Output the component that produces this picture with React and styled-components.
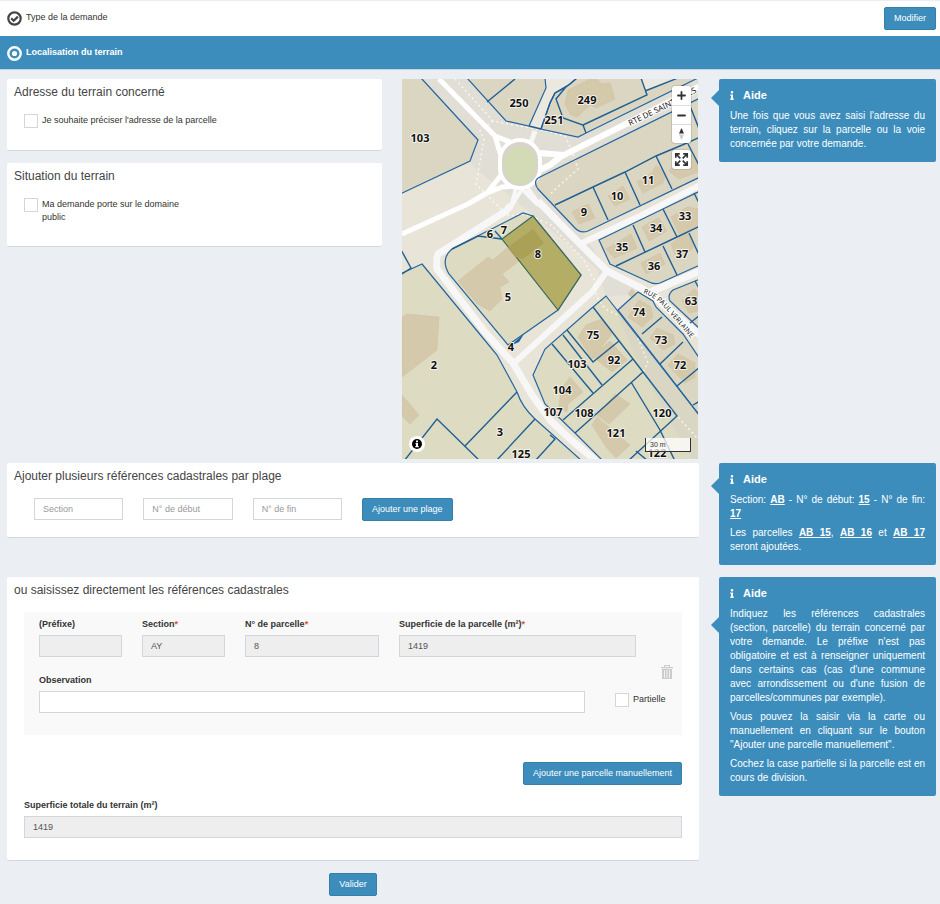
import React from "react";
import styled, { createGlobalStyle } from "styled-components";
import { FaInfo } from "react-icons/fa";

const GlobalStyle = createGlobalStyle`
  *,
  *::before,
  *::after {
    box-sizing: border-box;
  }
  body {
    margin: 0;
    background: #ebeef3;
    color: #333;
    font-family: "Liberation Sans", Arial, sans-serif;
    font-size: 9px;
    line-height: 13px;
  }
  button,
  input {
    font-family: inherit;
    font-size: inherit;
  }
`;

const CheckStepIcon = () => (
  <svg width="15" height="15" viewBox="0 0 15 15" fill="none" aria-hidden="true">
    <circle cx="7.5" cy="7.5" r="6.2" stroke="#444" strokeWidth="2.2" />
    <path d="M4.2 7.3l2.5 2.5 4.2-4.2" stroke="#444" strokeWidth="2.2" />
  </svg>
);

const CurrentStepIcon = () => (
  <svg width="15" height="15" viewBox="0 0 15 15" fill="none" aria-hidden="true">
    <circle cx="7.5" cy="7.5" r="6.2" stroke="#fff" strokeWidth="2.4" />
    <circle cx="7.5" cy="7.5" r="2.6" fill="#fff" />
  </svg>
);

const TrashIcon = () => (
  <svg width="12" height="14" viewBox="0 0 12 14" fill="#ccc" aria-hidden="true">
    <path d="M3 2V0h6v2H8V1H4v1zM0 2h12v1.2H0z" />
    <path
      fillRule="evenodd"
      d="M1 4h10v10H1zM3 5v8h.8V5zM5.6 5v8h.8V5zM8.2 5v8H9V5z"
    />
  </svg>
);

const roads = [
  { d: "M37 0L93 57L113 65M93 57L99 77", w: 5, c: "#fff" },
  { d: "M0 155L66 125L85 114L100 108L113 107M100 95L85 114", w: 5, c: "#fff" },
  { d: "M138 74L161 76L148 86L138 91M158 78L226 44L298 7", w: 6, c: "#fff" },
  { d: "M133 52L128 66", w: 5, c: "#f7f7f7" },
  { d: "M114 109L109 128L120 110L136 126M125 108L139 128", w: 4, c: "#f7f7f7" },
  {
    d: "M109 126L104 132L36 175Q34 178 35 190L83 253L111 284L130 316L148 341L168 360L194 382",
    w: 7,
    c: "#f7f7f7",
  },
  { d: "M136 122L178 165L205 192L241 210L258 223L300 258", w: 7, c: "#f7f7f7" },
  { d: "M178 165L240 136L298 106", w: 6, c: "#f7f7f7" },
  { d: "M205 192L190 213L111 285", w: 6, c: "#f7f7f7" },
  { d: "M246 214L298 192", w: 7, c: "#f7f7f7" },
];

const footpaths = [
  "M53 0L91 42L148 53L163 57L170 72L176 90L148 115",
  "M91 42L78 52L82 60L74 105L96 127L108 138",
  "M148 145L181 180L192 200L195 218L203 230L218 237",
  "M110 137L118 135L128 137L148 145",
  "M234 254L246 284L241 293L275 337L298 362",
];

// parcels drawn on the grey-beige side and on the greener side of the map
const beigeParcels = [
  "M-2 -2H18L20 0L76 61L68 82L-2 115Z",
  "M65 -1L104 42L127 47L144 9L143 -1Z",
  "M175 -1L163 9L153 14L148 24L139 50L176 58L184 54L298 -2Z",
  "M298 19L136 99Q131 103 136 110L172 148Q178 155 186 152L298 98Z",
  "M197 161L261 130L298 112V186L258 204Q252 206 245 202L208 185Z",
  "M298 200L271 211Q265 216 268 222L298 250Z",
  "M216 231L236 213L251 222L254 228L281 255L298 280V337L258 285Z",
];

const greenParcels = [
  "M20 185L76 253L95 276L115 313Q120 328 133 340L180 382H-2V195Z",
  "M50 170L121 134L131 137L179 196L156 231L106 266L47 195Q38 180 50 170Z",
  "M204 217L298 337V382H201L173 354L143 325L131 296L143 270L191 228Z",
];

const buildings = [
  "M163 25L166 11L192 -2L200 5L208 4L213 20L194 29L188 26L175 38L169 36Z",
  "M170 133L186 125L193 139L177 145Z",
  "M206 117L221 107L228 120L213 127Z",
  "M235 103L250 94L254 86L264 95L261 104L241 114Z",
  "M267 92L277 77L288 74L296 85V93L277 100Z",
  "M204 170L229 155L235 169L212 179Z",
  "M240 148L257 139L265 152L247 162Z",
  "M239 184L258 174L263 185L244 195Z",
  "M269 165L285 153L292 168L283 176L275 180Z",
  "M269 138L285 128L296 130V148L277 155Z",
  "M280 222L292 210L296 213V232L287 234Z",
  "M226 238L237 221L249 228L251 238L240 248Z",
  "M226 215L230 210L234 215L230 219Z",
  "M176 258L184 246L200 240L210 255L190 280Z",
  "M190 277L208 262L225 281L210 293Z",
  "M248 259L255 249L271 256L273 265L261 271Z",
  "M266 286L276 275L293 284L293 298L283 304Z",
  "M159 310L168 298L181 313L166 325L165 333L157 328Z",
  "M195 336L213 315L228 325L207 345Z",
  "M190 346L195 338L228 366L214 379L204 368Z",
  "M0 238L5 235L37 238L36 255L35 271L0 298Z",
  "M0 316L17 336L8 345L0 337Z",
  "M56 202L86 178L91 181L106 168L117 182L100 195L107 203L98 208L100 220L88 232L75 225L72 221Z",
];

const boundaries = [
  "M85 23L113 0",
  "M127 47L139 50",
  "M139 50L148 24L153 14L168 5L175 -1M184 54L181 46L161 39L154 20L163 9M181 46L245 16L239 -1M243 12L276 -1",
  "M153 126L191 108L223 93L254 77L285 64L298 58",
  "M191 108L206 141M223 93L238 126M254 77L270 110M286 65L298 88M288 27L298 52",
  "M214 187L275 158L298 147M231 146L243 173M261 130L275 158M261 167L275 196M287 154L298 178M292 114L298 126",
  "M293 202L298 211M288 244L298 236",
  "M-2 169L9 189L0 195",
  "M50 170L76 157L100 160L93 152",
  "M115 313L63 367M2 382L35 340L78 382M133 340L94 382M133 382L153 360L148 356",
  "M150 265L191 314M161 256L200 306M165 251L191 283L217 262M191 228L231 280L275 337L226 382",
  "M161 341L231 280M173 354L241 293M229 303L258 351L273 382M234 372L246 382",
  "M258 285L281 263M275 307L298 288M240 255L260 238M291 326L298 322",
];

const labels = [
  ["103", 18, 59],
  ["250", 117, 24],
  ["249", 185, 21],
  ["251", 152, 41],
  ["11", 246, 101],
  ["10", 215, 117],
  ["9", 182, 133],
  ["33", 283, 137],
  ["34", 254, 149],
  ["35", 220, 168],
  ["36", 252, 187],
  ["37", 280, 175],
  ["8", 136, 175],
  ["7", 102, 151],
  ["6", 88, 155],
  ["5", 106, 218],
  ["4", 109, 268],
  ["2", 32, 286],
  ["3", 98, 353],
  ["125", 119, 375],
  ["63", 289, 222],
  ["74", 237, 233],
  ["75", 191, 256],
  ["73", 259, 261],
  ["72", 278, 286],
  ["92", 212, 281],
  ["103", 175, 285],
  ["104", 160, 311],
  ["107", 151, 333],
  ["108", 182, 334],
  ["120", 260, 334],
  ["121", 214, 354],
  ["122", 255, 374],
];

const ParcelMap = () => (
  <MapSvg viewBox="0 0 296 380" preserveAspectRatio="xMidYMid slice">
    <rect width="296" height="380" fill="#e8e4d8" />
    <path
      d="M20 0H296V20L136 99L178 150L205 192L250 215L204 217L195 190L130 135L74 90L68 82L76 61Z"
      fill="#e1ded6"
    />
    <path d="M143 0H175L148 24L139 50L127 47L144 9Z" fill="#ebe9df" />
    {beigeParcels.map((d) => (
      <path key={d} d={d} fill="#dad6c2" />
    ))}
    <path d="M239 0L243 12L276 0Z" fill="#ebe9df" />
    {greenParcels.map((d) => (
      <path key={d} d={d} fill="#dddcc2" />
    ))}
    <path d="M211 225L228 247L234 254L258 285L296 335V380H290L241 293Z" fill="#d9d6c4" />
    {buildings.map((d) => (
      <path key={d} d={d} fill="#d5c9ab" stroke="#cfbfa0" strokeWidth="0.5" />
    ))}
    {roads.map((r) => (
      <path
        key={r.d}
        d={r.d}
        fill="none"
        stroke={r.c}
        strokeWidth={r.w}
        strokeLinejoin="round"
      />
    ))}
    <rect x="98" y="61" width="40" height="48" rx="20" fill="#d8d4cb" stroke="#fff" strokeWidth="4" />
    <ellipse cx="118" cy="86" rx="16" ry="19" fill="#d3dbb6" />
    {footpaths.map((d) => (
      <path
        key={d}
        d={d}
        fill="none"
        stroke="#fff"
        strokeWidth="1.5"
        strokeDasharray="2 3"
        opacity="0.75"
      />
    ))}
    <g fill="none" stroke="#2465a0" strokeWidth="1.2">
      {[...beigeParcels, ...greenParcels].map((d) => (
        <path key={d} d={d} />
      ))}
    </g>
    <g fill="none" stroke="#1f5f94" strokeWidth="1.4">
      {boundaries.map((d) => (
        <path key={d} d={d} />
      ))}
    </g>
    <path d="M108 267L122 255L117 263Z" fill="#1f5f94" />
    <path d="M131 137L100 160L156 231L179 196Z" fill="#b3ad66" stroke="#3c6b58" strokeWidth="1.2" />
    <path d="M106 168L131 150L142 164L121 180L113 178Z" fill="#aaa157" />
    <StreetName $size={8} transform="translate(228 47) rotate(-26)">
      RTE DE SAINT
    </StreetName>
    <StreetName $size={8} transform="translate(287 17) rotate(-26)">
      ES
    </StreetName>
    <path id="verlaine" d="M241 214Q252 218 262 228L299 271" fill="none" />
    <StreetName>
      <textPath href="#verlaine">RUE PAUL VERLAINE</textPath>
    </StreetName>
    {labels.map(([n, x, y]) => (
      <ParcelNumber key={`${n}-${x}`} x={x} y={y + 4}>
        {n}
      </ParcelNumber>
    ))}
  </MapSvg>
);

const CadastralMap = () => (
  <MapFrame>
    <ParcelMap />
    <MapControls>
      <ControlGroup>
        <MapButton type="button" aria-label="Zoom avant">
          <svg width="9" height="9" viewBox="0 0 9 9" aria-hidden="true">
            <path d="M4.5 1v7M1 4.5h7" stroke="#333" strokeWidth="1.8" strokeLinecap="round" />
          </svg>
        </MapButton>
        <MapButton type="button" aria-label="Zoom arrière">
          <svg width="9" height="9" viewBox="0 0 9 9" aria-hidden="true">
            <path d="M1 4.5h7" stroke="#333" strokeWidth="1.8" strokeLinecap="round" />
          </svg>
        </MapButton>
        <MapButton type="button" aria-label="Orienter au nord">
          <svg width="7" height="14" viewBox="0 0 7 14" aria-hidden="true">
            <path d="M3.5 1L6 6.5H1z" fill="#333" />
            <path d="M3.5 13L6 7.5H1z" fill="#ccc" />
          </svg>
        </MapButton>
      </ControlGroup>
      <ControlGroup>
        <MapButton type="button" aria-label="Plein écran">
          <svg width="15" height="15" viewBox="0 0 15 15" fill="none" aria-hidden="true">
            <path
              d="M1.8 5.8V1.8H5.8M9.2 1.8h4V5.8M13.2 9.2v4H9.2M5.8 13.2H1.8V9.2M2 2l4.3 4.3M13 2L8.7 6.3M13 13L8.7 8.7M2 13l4.3-4.3"
              stroke="#333"
              strokeWidth="1.7"
            />
          </svg>
        </MapButton>
      </ControlGroup>
    </MapControls>
    <AttributionButton type="button" aria-label="Attribution">
      <svg width="10" height="10" viewBox="0 0 10 10" aria-hidden="true">
        <circle cx="5" cy="5" r="5" fill="#000" />
        <path d="M4 1.5h2v1.7H4zM3.5 4H6v3h.7v1.2H3.3V7H4V5.2h-.5z" fill="#fff" />
      </svg>
    </AttributionButton>
    <MapScale>30 m</MapScale>
  </MapFrame>
);

const Aide = ({ children }) => (
  <HelpBox>
    <HelpTitle>
      <FaInfo aria-hidden="true" />
      Aide
    </HelpTitle>
    {children}
  </HelpBox>
);

const Field = ({ id, label, required, value, ...rest }) => (
  <FieldWrap>
    <FieldLabel htmlFor={id}>
      {label}
      {required && <Required>*</Required>}
    </FieldLabel>
    <TextInput id={id} defaultValue={value} {...rest} />
  </FieldWrap>
);

const App = () => {
  return (
    <>
      <GlobalStyle />
      <Step>
        <StepName>
          <CheckStepIcon />
          <span>Type de la demande</span>
        </StepName>
        <Button type="button">Modifier</Button>
      </Step>
      <Step $active>
        <StepName>
          <CurrentStepIcon />
          <span>Localisation du terrain</span>
        </StepName>
      </Step>

      <Page>
        <Row $space={4}>
          <TerrainRow>
            <CardStack>
              <Card>
                <CardTitle>Adresse du terrain concerné</CardTitle>
                <CardBody>
                  <CheckLabel>
                    <Checkbox type="checkbox" />
                    Je souhaite préciser l'adresse de la parcelle
                  </CheckLabel>
                </CardBody>
              </Card>
              <Card>
                <CardTitle>Situation du terrain</CardTitle>
                <CardBody>
                  <CheckLabel $narrow>
                    <Checkbox type="checkbox" />
                    Ma demande porte sur le domaine public
                  </CheckLabel>
                </CardBody>
              </Card>
            </CardStack>
            <CadastralMap />
          </TerrainRow>
          <Aide>
            <p>
              Une fois que vous avez saisi l'adresse du terrain, cliquez sur la
              parcelle ou la voie concernée par votre demande.
            </p>
          </Aide>
        </Row>

        <Row $space={12}>
          <Card>
            <CardTitle>
              Ajouter plusieurs références cadastrales par plage
            </CardTitle>
            <RangeForm>
              <TextInput aria-label="Section" placeholder="Section" />
              <TextInput aria-label="N° de début" placeholder="N° de début" />
              <TextInput aria-label="N° de fin" placeholder="N° de fin" />
              <Button type="button">Ajouter une plage</Button>
            </RangeForm>
          </Card>
          <Aide>
            <p>
              Section: <Example>AB</Example> - N° de début: <Example>15</Example>{" "}
              - N° de fin: <Example>17</Example>
            </p>
            <p>
              Les parcelles <Example>AB 15</Example>, <Example>AB 16</Example> et{" "}
              <Example>AB 17</Example> seront ajoutées.
            </p>
          </Aide>
        </Row>

        <Row $space={12}>
          <Card>
            <CardTitle>
              ou saisissez directement les références cadastrales
            </CardTitle>
            <CardBody>
              <ParcelPanel>
                <ParcelFields>
                  <Field id="prefixe" label="(Préfixe)" disabled />
                  <Field id="section" label="Section" required value="AY" disabled />
                  <Field id="numero" label="N° de parcelle" required value="8" disabled />
                  <Field
                    id="superficie"
                    label="Superficie de la parcelle (m²)"
                    required
                    value="1419"
                    disabled
                  />
                </ParcelFields>
                <ObservationRow>
                  <Field id="observation" label="Observation" />
                  <ParcelActions>
                    <DeleteButton type="button" aria-label="Supprimer la parcelle">
                      <TrashIcon />
                    </DeleteButton>
                    <CheckLabel>
                      <Checkbox type="checkbox" />
                      Partielle
                    </CheckLabel>
                  </ParcelActions>
                </ObservationRow>
              </ParcelPanel>
              <AddRow>
                <Button type="button">Ajouter une parcelle manuellement</Button>
              </AddRow>
              <Field
                id="total"
                label="Superficie totale du terrain (m²)"
                value="1419"
                disabled
              />
            </CardBody>
          </Card>
          <Aide>
            <p>
              Indiquez les références cadastrales (section, parcelle) du terrain
              concerné par votre demande. Le préfixe n'est pas obligatoire et est
              à renseigner uniquement dans certains cas (cas d'une commune avec
              arrondissement ou d'une fusion de parcelles/communes par exemple).
            </p>
            <p>
              Vous pouvez la saisir via la carte ou manuellement en cliquant sur
              le bouton "Ajouter une parcelle manuellement".
            </p>
            <p>
              Cochez la case partielle si la parcelle est en cours de division.
            </p>
          </Aide>
        </Row>

        <Row>
          <SubmitRow>
            <Button type="submit">Valider</Button>
          </SubmitRow>
        </Row>
      </Page>
    </>
  );
};

export default App;

const Step = styled.header`
  display: flex;
  align-items: center;
  justify-content: space-between;
  height: ${({ $active }) => ($active ? "34px" : "36px")};
  padding: ${({ $active }) => ($active ? "2px" : "0")} 4px 0 7px;
  background: ${({ $active }) => ($active ? "#3c8dbc" : "#fff")};
  color: ${({ $active }) => ($active ? "#fff" : "#333")};
  font-weight: ${({ $active }) => ($active ? "bold" : "normal")};
  border-top: ${({ $active }) => ($active ? "none" : "1px solid #ebeef3")};
  border-bottom: ${({ $active }) => ($active ? "1px solid #c5d3de" : "none")};
`;

const StepName = styled.div`
  display: flex;
  align-items: center;
  gap: 4px;

  span {
    padding-bottom: 3px;
  }
`;

const Page = styled.main`
  padding: 9px 4px 6px 7px;
`;

const Row = styled.div`
  display: grid;
  grid-template-columns: 692fr 217fr;
  align-items: start;
  gap: 20px;
  margin-bottom: ${({ $space }) => $space || 0}px;
`;

const TerrainRow = styled.div`
  display: grid;
  grid-template-columns: 375fr 296fr;
  align-items: start;
  gap: 20px;
  padding-right: 1px;
`;

const CardStack = styled.div`
  display: grid;
  gap: 12px;
`;

const Card = styled.section`
  background: #fff;
  border-bottom: 1px solid #d2d6de;
  border-radius: 2px;
  padding-top: 6px;
`;

const CardTitle = styled.h2`
  margin: 0;
  padding: 0 7px;
  color: #444;
  font-size: 12px;
  font-weight: normal;
  line-height: 14px;
`;

const CardBody = styled.div`
  padding: 15px 17px 22px;
`;

const CheckLabel = styled.label`
  display: flex;
  align-items: flex-start;
  gap: 4px;
  max-width: ${({ $narrow }) => ($narrow ? "170px" : "none")};
`;

const Checkbox = styled.input`
  appearance: none;
  flex: none;
  width: 14px;
  height: 14px;
  margin: 0;
  background: #fff;
  border: 1px solid #d6d6d6;

  &:checked {
    background: #3c8dbc;
  }
`;

const Button = styled.button`
  flex: none;
  height: 23px;
  padding: 0 9px 1px;
  background: #3c8dbc;
  border: 1px solid #367fa9;
  border-radius: 2px;
  color: #fff;
  cursor: pointer;

  &:hover {
    background: #367fa9;
  }
`;

const TextInput = styled.input`
  width: 100%;
  height: 22px;
  padding: 0 8px;
  background: #fff;
  border: 1px solid #d2d6de;
  border-radius: 0;
  color: #555;

  &::placeholder {
    color: #999;
    opacity: 1;
  }
  &:disabled {
    background: #eee;
  }
`;

const RangeForm = styled.form`
  display: flex;
  gap: 20px;
  padding: 15px 27px 16px;

  input {
    width: 14%;
  }
`;

const FieldWrap = styled.div`
  display: grid;
  gap: 4px;
`;

const FieldLabel = styled.label`
  font-weight: bold;
  line-height: 14px;
`;

const Required = styled.span`
  color: #dd4b39;
`;

const ParcelPanel = styled.div`
  padding: 5px 0 22px 15px;
  background: #f9f9f9;
`;

const ParcelFields = styled.div`
  display: grid;
  grid-template-columns: 83fr 83fr 134fr 237fr;
  gap: 20px;
  padding-right: 46px;
`;

const ObservationRow = styled.div`
  display: grid;
  grid-template-columns: 1fr 67px;
  align-items: end;
  gap: 30px;
  padding-top: 8px;
`;

const ParcelActions = styled.div`
  display: flex;
  flex-direction: column;
  gap: 14px;
  padding-bottom: 6px;
`;

const DeleteButton = styled.button`
  display: flex;
  align-self: flex-end;
  margin-right: 9px;
  padding: 0;
  background: none;
  border: 0;
  cursor: pointer;
`;

const AddRow = styled.div`
  display: flex;
  justify-content: flex-end;
  padding: 27px 0 13px;
`;

const SubmitRow = styled.div`
  display: flex;
  justify-content: center;
`;

const HelpBox = styled.aside`
  position: relative;
  padding: 9px 11px 11px;
  background: #3c8dbc;
  border-radius: 2px;
  color: #fff;
  font-size: 10px;
  line-height: 14px;
  text-align: justify;

  &::before {
    content: "";
    position: absolute;
    top: 21%;
    right: 100%;
    margin-top: -6px;
    border: 8px solid transparent;
    border-left-width: 0;
    border-right-color: #3c8dbc;
  }
  p {
    margin: 0;
  }
  p + p {
    margin-top: 5px;
  }
`;

const HelpTitle = styled.h3`
  display: flex;
  align-items: center;
  gap: 9px;
  margin: 0 0 7px;
  font-size: 11px;
  line-height: 14px;

  svg {
    width: 4px;
    height: 9px;
  }
`;

const Example = styled.b`
  text-decoration: underline;
`;

const MapFrame = styled.div`
  position: relative;
  height: 380px;
  overflow: hidden;
`;

const MapSvg = styled.svg`
  display: block;
  width: 100%;
  height: 100%;
`;

const ParcelNumber = styled.text`
  fill: #111;
  stroke: #f4f2ea;
  stroke-width: 2px;
  stroke-linejoin: round;
  paint-order: stroke;
  font-family: "Noto Sans", "Open Sans", sans-serif;
  font-size: 11px;
  font-weight: bold;
  text-anchor: middle;
`;

const StreetName = styled.text`
  fill: #222;
  stroke: #fff;
  stroke-width: 2px;
  paint-order: stroke;
  font-family: "Noto Sans", "Open Sans", sans-serif;
  font-size: ${({ $size }) => $size || 7}px;
`;

const MapControls = styled.div`
  position: absolute;
  top: 7px;
  right: 7px;
  display: grid;
  gap: 7px;
`;

const ControlGroup = styled.div`
  overflow: hidden;
  background: #fff;
  border-radius: 3px;
  box-shadow: 0 0 0 1px rgba(0, 0, 0, 0.1);
`;

const MapButton = styled.button`
  display: flex;
  align-items: center;
  justify-content: center;
  width: 19px;
  height: 19px;
  padding: 0;
  background: none;
  border: 0;
  cursor: pointer;

  & + & {
    border-top: 1px solid #ddd;
  }
`;

const AttributionButton = styled.button`
  position: absolute;
  bottom: 7px;
  left: 7px;
  display: flex;
  align-items: center;
  justify-content: center;
  width: 16px;
  height: 16px;
  padding: 0;
  background: #fff;
  border: 0;
  border-radius: 50%;
`;

const MapScale = styled.div`
  position: absolute;
  right: 7px;
  bottom: 7px;
  width: 46px;
  height: 14px;
  padding: 0 4px;
  background: rgba(255, 255, 255, 0.75);
  border: 1px solid #333;
  border-top: 0;
  color: #333;
  font-size: 7px;
  line-height: 13px;
`;
